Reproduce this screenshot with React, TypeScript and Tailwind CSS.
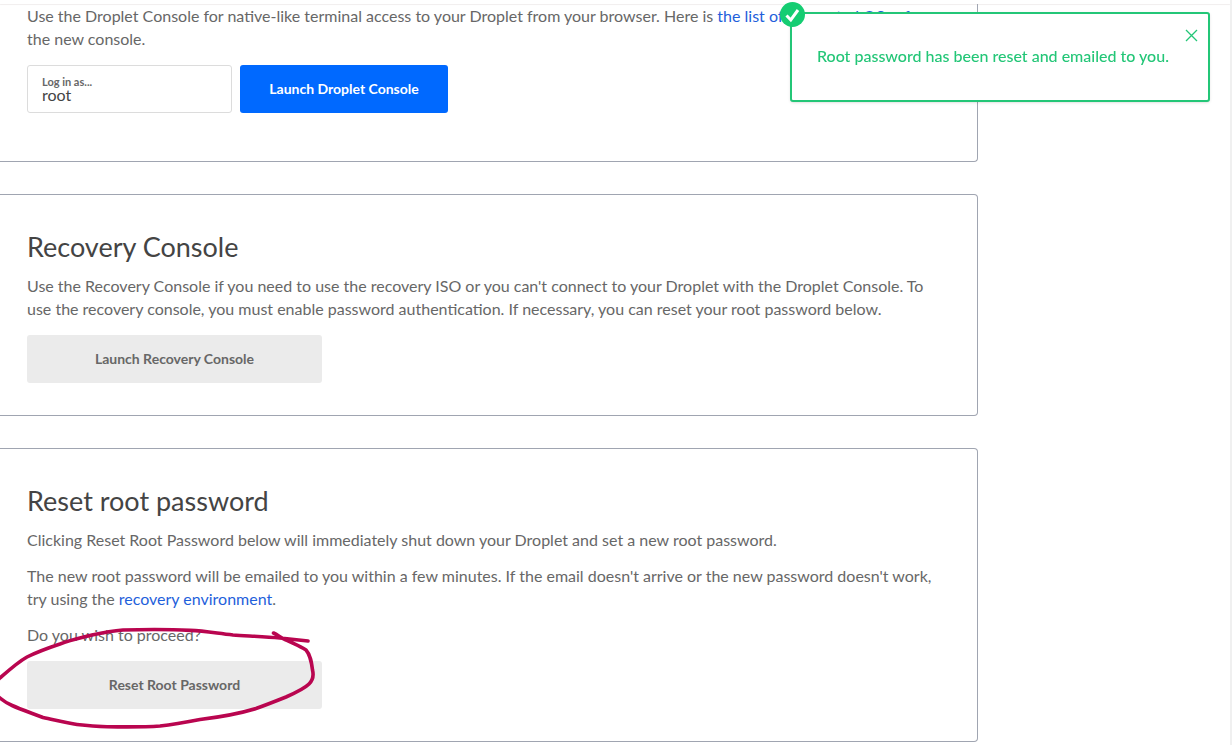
import { useState, type ReactNode } from "react";

function Card({ title, children }: { title: string; children: ReactNode }) {
  return (
    <section className="rounded-r border border-l-0 border-[#a0a5b1] pb-8 pl-[27px] pr-8 pt-8">
      <h2 className="mb-2 text-[27px] leading-[39px] text-[#444]">{title}</h2>
      {children}
    </section>
  );
}

function GrayButton({ children }: { children: ReactNode }) {
  return (
    <button type="button" className="h-12 w-[295px] rounded-[3px] bg-[#ebebeb] text-sm font-bold text-[#676767]">
      {children}
    </button>
  );
}

function Highlight() {
  return (
    <svg
      aria-hidden="true"
      viewBox="0 0 320 106"
      className="pointer-events-none absolute -left-[27px] -top-[35px] h-[106px] w-[320px]"
      fill="none"
      stroke="#b9054f"
      strokeWidth="3.6"
      strokeLinecap="round"
      strokeLinejoin="round"
    >
      <path d="M308 15 L280 12 C264 10.5 248 10 233 9 C215 7 205 5 190 4.4 C168 3.2 145 3.4 123 4 C110 5 101 7 92 9 C80 12 70 14 60 18 C48 22 37 26 27 31 C18 36 8 45 0 52 C-8 59 -8 66 0 72 C8 79 18 82 43 91.500 C55 94 66 97 77 98.500 C90 100 98 100.500 107 100.700 C125 101 146 101 160 100 C173 98.500 187 96 200 93.500 C220 91 238 88 256 82.500 C266 79 276 75 286 71 C295 67 304 63 309 58 C314 53 313.500 48 312.500 44 C311.500 36 310.500 29 306 24 C300 20 292 17 286 14 C281 12 278 9 273.500 7" />
    </svg>
  );
}

function Toast({ onClose }: { onClose: () => void }) {
  return (
    <div role="status" className="fixed right-[22px] top-3 z-20 flex h-[90px] w-[420px] items-center rounded-[3px] border-2 border-[#23c677] bg-white pb-[3px] pl-[25px] shadow-sm">
      <svg aria-hidden="true" viewBox="0 0 25 25" className="absolute -left-3 -top-3 size-[25px]">
        <circle cx="12.500" cy="12.500" r="12.500" fill="#15cd72" />
        <path d="M6.500 13.500 L10.800 18 L18 8" fill="none" stroke="#fff" strokeWidth="3" />
      </svg>
      <p className="whitespace-nowrap text-base font-medium leading-6 text-[#23c677]">
        Root password has been reset and emailed to you.
      </p>
      <button type="button" aria-label="Close" onClick={onClose} className="absolute right-2.5 top-[15px] text-[#23c677]">
        <svg viewBox="0 0 13 13" className="size-[13px]" fill="none" stroke="currentColor" strokeWidth="1.300">
          <path d="M1 1 L12 12 M12 1 L1 12" />
        </svg>
      </button>
    </div>
  );
}

export default function App() {
  const [open, setOpen] = useState(true);
  return (
    <div className="min-h-screen border-r-2 border-[#f0f0f0] bg-white font-['Lato','Open_Sans',sans-serif] text-base leading-[23px] text-[#676767]">
      <header className="h-1 bg-white shadow-[0_1px_1px_#f1eeee]" />
      {open && <Toast onClose={() => setOpen(false)} />}
      <main className="flex max-w-[978px] flex-col gap-8 pb-[3px]">
        <section className="rounded-br border-b border-r border-[#a0a5b1] pb-12 pl-[27px] pr-8">
          <p>
            Use the Droplet Console for native-like terminal access to your Droplet from your browser. Here is{" "}
            <a href="#supported" className="text-[#1f5fdb]">the list of supported OSes for</a> the new console.
          </p>
          <form className="mt-[15px] flex gap-2" onSubmit={(e) => e.preventDefault()}>
            <div className="flex h-12 w-[205px] flex-col rounded-[3px] border border-[#dcdcdc] px-3.5 pt-2.5">
              <label htmlFor="login" className="text-[11px] font-bold leading-3">Log in as...</label>
              <input id="login" defaultValue="root" className="-mt-0.5 h-4 w-full text-base leading-4 text-[#444] outline-none" />
            </div>
            <button type="submit" className="h-12 w-52 rounded-[3px] bg-[#0069ff] text-sm font-bold text-white">
              Launch Droplet Console
            </button>
          </form>
        </section>

        <Card title="Recovery Console">
          <p className="mb-[15px]">
            Use the Recovery Console if you need to use the recovery ISO or you can't connect to your Droplet with the
            Droplet Console. To use the recovery console, you must enable password authentication. If necessary, you can
            reset your root password below.
          </p>
          <GrayButton>Launch Recovery Console</GrayButton>
        </Card>

        <Card title="Reset root password">
          <div className="mb-[15px] flex flex-col gap-[13px]">
            <p>Clicking Reset Root Password below will immediately shut down your Droplet and set a new root password.</p>
            <p>
              The new root password will be emailed to you within a few minutes. If the email doesn't arrive or the new
              password doesn't work, try using the{" "}
              <a href="#recovery" className="text-[#1f5fdb]">recovery environment</a>.
            </p>
            <p>Do you wish to proceed?</p>
          </div>
          <div className="relative">
            <GrayButton>Reset Root Password</GrayButton>
            <Highlight />
          </div>
        </Card>
      </main>
    </div>
  );
}
